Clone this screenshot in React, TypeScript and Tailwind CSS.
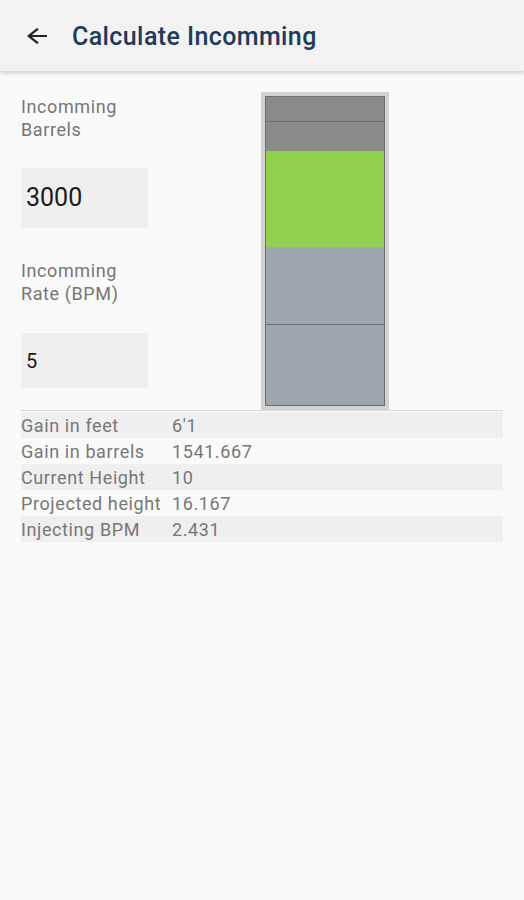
import React from "react";

const rows: [string, string][] = [
  ["Gain in feet", "6'1"],
  ["Gain in barrels", "1541.667"],
  ["Current Height", "10"],
  ["Projected height", "16.167"],
  ["Injecting BPM", "2.431"],
];

export default function App() {
  return (
    <div className="w-[524px] h-[900px] bg-[#fafafa] overflow-hidden" style={{ fontFamily: "Roboto, 'Noto Sans', sans-serif" }}>
      <header className="h-[71px] bg-[#f2f2f2] flex items-center shadow-[0_2px_4px_rgba(0,0,0,0.18)] relative z-10">
        <svg className="ml-[22px] w-[30px] h-[24px]" viewBox="0 0 24 24" preserveAspectRatio="none" fill="#222">
          <path d="M20 11H7.83l5.59-5.59L12 4l-8 8 8 8 1.41-1.41L7.83 13H20v-2z" />
        </svg>
        <h1 className="ml-[20px] text-[25px] font-medium text-[#1d3b5b] tracking-[0.4px] mt-[2px]">Calculate Incomming</h1>
      </header>
      <div className="flex pt-[21px]">
        <div className="w-[240px] pl-[21px] flex flex-col pt-[3px]">
          <div className="text-[18px] leading-[23px] tracking-[0.6px] text-[#767676]">Incomming<br />Barrels</div>
          <div className="mt-[27px] w-[127px] h-[60px] bg-[#efefef] flex items-center pl-[5px] text-[25px] text-[#1a1a1a]">3000</div>
          <div className="mt-[31px] text-[18px] leading-[23px] tracking-[0.6px] text-[#767676]">Incomming<br />Rate (BPM)</div>
          <div className="mt-[28px] w-[127px] h-[55px] bg-[#efefef] flex items-center pl-[5px] text-[20px] text-[#1a1a1a]">5</div>
        </div>
        <div className="ml-[21px] w-[128px] h-[318px] border-[4px] border-[#d2d2d2] bg-[#d2d2d2]">
          <div className="w-full h-full border border-[#6e6e6e] flex flex-col">
            <div className="h-[25px] bg-[#8a8a8a] border-b border-[#6e6e6e]" />
            <div className="h-[29px] bg-[#8a8a8a]" />
            <div className="h-[96px] bg-[#92d050]" />
            <div className="h-[78px] bg-[#9ea6ae] border-b border-[#6e6e6e]" />
            <div className="flex-1 bg-[#9ea6ae]" />
          </div>
        </div>
      </div>
      <div className="mx-[21px] w-[482px] border-t border-[#d8d8d8] pt-[1px]">
        {rows.map(([k, v], i) => (
          <div key={k} className={`flex h-[26px] items-center text-[18px] tracking-[0.6px] text-[#777777] ${i % 2 === 0 ? "bg-[#efefef]" : "bg-[#fafafa]"}`}>
            <span className="w-[151px] whitespace-nowrap">{k}</span>
            <span>{v}</span>
          </div>
        ))}
      </div>
    </div>
  );
}
